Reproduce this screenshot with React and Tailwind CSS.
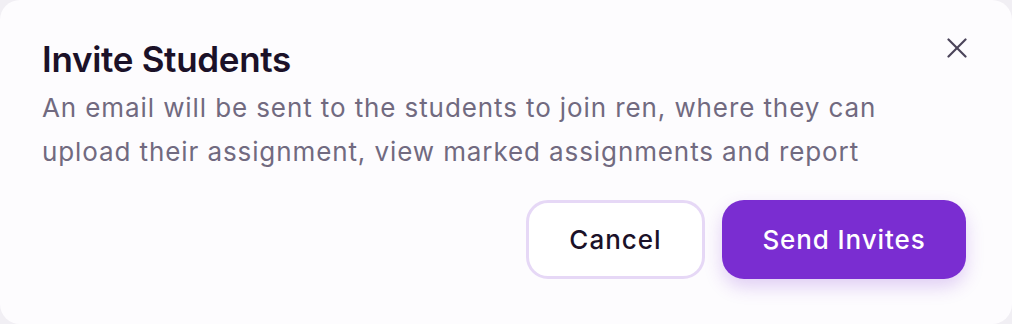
export default function App() {
  return (
    <div className="h-[324px] w-full bg-[#f1eff4]" style={{ fontFamily: 'Inter, "Noto Sans", sans-serif' }}>
      <div className="flex h-full w-full flex-col rounded-[20px] bg-[#fdfcfe] pl-[42px] pr-[46px] pt-[39px]">
        <div className="flex items-start justify-between">
          <h2 className="text-[35px] font-semibold leading-[40px] tracking-[-0.3px] text-[#1b1128]">
            Invite Students
          </h2>
          <button type="button" aria-label="Close" className="mt-[-1px] mr-[-1px] p-0 text-[#4a4359]">
            <svg width="20" height="20" viewBox="0 0 20 20" fill="none" stroke="currentColor" strokeWidth="2.2" strokeLinecap="round">
              <path d="M1.5 1.5 18.5 18.5" />
              <path d="M18.5 1.5 1.5 18.5" />
            </svg>
          </button>
        </div>
        <p className="mt-[7px] max-w-[880px] text-[26px] leading-[44px] tracking-[0.9px] text-[#716a80]">
          An email will be sent to the students to join ren, where they can upload their assignment, view marked assignments and report
        </p>
        <div className="mt-[26px] flex justify-end gap-[17px]">
          <button
            type="button"
            className="flex h-[79px] w-[179px] items-center justify-center rounded-[22px] border-[3px] border-[#e6d8f6] bg-white text-[26px] font-medium tracking-[1px] text-[#1b1128]"
          >
            Cancel
          </button>
          <button
            type="button"
            className="flex h-[79px] w-[244px] items-center justify-center rounded-[22px] bg-[#7a2dd1] text-[26px] font-medium tracking-[0.9px] text-white shadow-[0_8px_18px_rgba(122,45,209,0.22)]"
          >
            Send Invites
          </button>
        </div>
      </div>
    </div>
  )
}
